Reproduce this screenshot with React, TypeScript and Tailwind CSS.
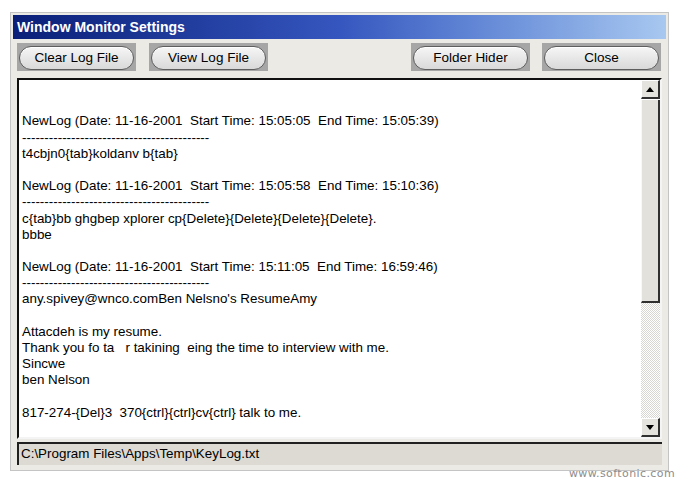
import React from "react";

const font = { fontFamily: '"Liberation Sans", Arial, sans-serif' };

const dashes = "-".repeat(42);

// log text exactly as shown in the box, blank strings are empty lines
const logLines = [
  "",
  "",
  "NewLog (Date: 11-16-2001  Start Time: 15:05:05  End Time: 15:05:39)",
  dashes,
  "t4cbjn0{tab}koldanv b{tab}",
  "",
  "NewLog (Date: 11-16-2001  Start Time: 15:05:58  End Time: 15:10:36)",
  dashes,
  "c{tab}bb ghgbep xplorer cp{Delete}{Delete}{Delete}{Delete}.",
  "bbbe",
  "",
  "NewLog (Date: 11-16-2001  Start Time: 15:11:05  End Time: 16:59:46)",
  dashes,
  "any.spivey@wnco.comBen Nelsno's ResumeAmy",
  "",
  "Attacdeh is my resume.",
  "Thank you fo ta   r takining  eing the time to interview with me.",
  "Sincwe",
  "ben Nelson",
  "",
  "817-274-{Del}3  370{ctrl}{ctrl}cv{ctrl} talk to me.",
];

function PillButton({ label }: { label: string }) {
  return (
    <div className="w-[119px] h-[28px] bg-[#a6a6a6] p-[2px]">
      <button className="w-full h-full rounded-full border border-[#5e5e5e] bg-gradient-to-b from-[#f6f6f6] to-[#d9d9d9] shadow-[inset_0_1px_0_#ffffff] text-[13.5px] text-black leading-none">
        {label}
      </button>
    </div>
  );
}

function ArrowButton({ up }: { up: boolean }) {
  return (
    <div className="w-[19px] h-[19px] flex items-center justify-center bg-[#e4e3dd] border-t border-l border-t-white border-l-white border-r-2 border-b-2 border-r-[#303030] border-b-[#303030]">
      <svg width="8" height="5" viewBox="0 0 8 5">
        {up ? <polygon points="0,5 8,5 4,0" fill="#000" /> : <polygon points="0,0 8,0 4,5" fill="#000" />}
      </svg>
    </div>
  );
}

function ScrollBar() {
  return (
    <div className="w-[19px] flex flex-col shrink-0">
      <div className="h-[20px]">
        <ArrowButton up />
      </div>
      <div className="h-[203px] bg-[#e2e1db] border-l border-l-[#f8f8f8] border-r-2 border-r-[#303030] border-b-2 border-b-[#303030]" />
      <div className="flex-1 bg-[repeating-conic-gradient(#ffffff_0_25%,#d8d6d0_0_50%)] bg-[length:2px_2px]" />
      <ArrowButton up={false} />
    </div>
  );
}

export default function App() {
  return (
    <div className="relative w-[680px] h-[483px] bg-white pt-[12px] pl-[10px]" style={font}>
      <div className="w-[659px] h-[459px] border border-[#c4c4c4] bg-[#ebeae5] flex flex-col">
        {/* title bar */}
        <div className="mx-[2px] mt-[2px] h-[24px] bg-gradient-to-r from-[#0a1f78] via-[#3656bf] to-[#a8c8f0] flex items-center pl-[4px]">
          <span className="text-white font-bold text-[14px]">Window Monitor Settings</span>
        </div>

        {/* buttons */}
        <div className="mt-[4px] h-[28px] pl-[6px] pr-[7px] flex justify-between">
          <div className="flex gap-[13px]">
            <PillButton label="Clear Log File" />
            <PillButton label="View Log File" />
          </div>
          <div className="flex gap-[12px]">
            <PillButton label="Folder Hider" />
            <PillButton label="Close" />
          </div>
        </div>

        {/* log box */}
        <div className="mt-[7px] ml-[6px] w-[645px] h-[361px] flex border-t-2 border-l-2 border-t-[#101010] border-l-[#101010] border-r-2 border-b-2 border-r-[#f4f4f4] border-b-[#f4f4f4] bg-white">
          <div className="flex-1 overflow-hidden pl-[3px] pt-[1px] text-[13.4px] leading-[16.2px] text-black whitespace-pre">
            {logLines.map((line, i) => (
              <div key={i} className="h-[16.2px]">
                {line}
              </div>
            ))}
          </div>
          <ScrollBar />
        </div>

        {/* status bar */}
        <div className="mt-[3px] ml-[6px] w-[645px] h-[23px] bg-[#dcdad3] border-t-2 border-l-2 border-t-[#202020] border-l-[#202020] flex items-center pl-[2px]">
          <span className="text-[13.4px] text-black">C:\Program Files\Apps\Temp\KeyLog.txt</span>
        </div>
      </div>

      <span
        className="absolute right-[5px] bottom-[1px] text-[11px] text-[#8c8c8c] tracking-[0.4px]"
        style={{ fontFamily: '"DejaVu Sans", Verdana, sans-serif' }}
      >
        www.softonic.com
      </span>
    </div>
  );
}
